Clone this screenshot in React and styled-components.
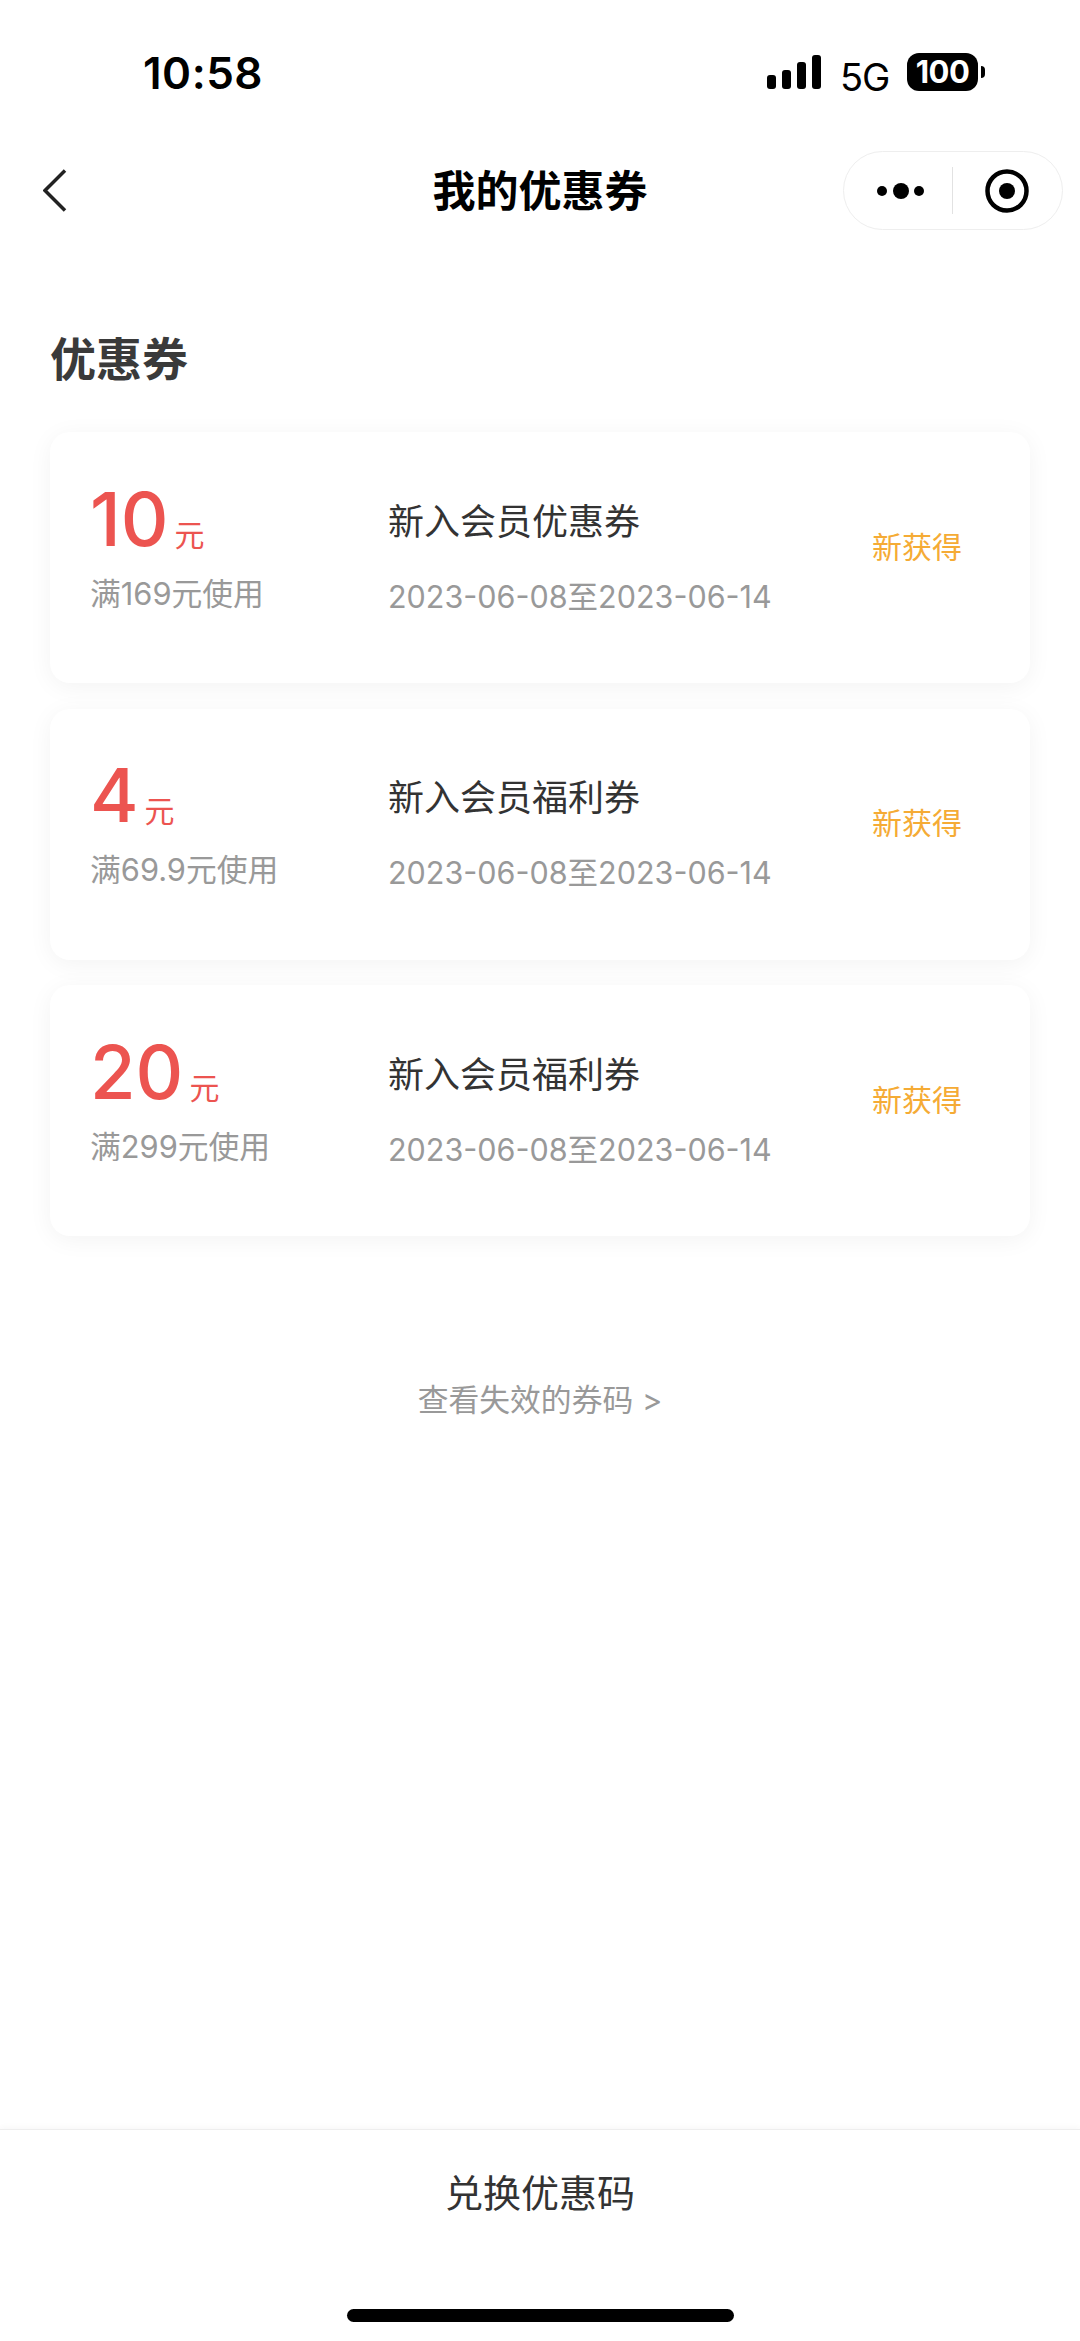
import styled, { createGlobalStyle } from "styled-components";

const GlobalStyle = createGlobalStyle`
  html, body {
    margin: 0;
    padding: 0;
    background: #fff;
  }
  * {
    box-sizing: border-box;
  }
`;

const Page = styled.div`
  width: 1080px;
  height: 2341px;
  display: flex;
  flex-direction: column;
  background: #fff;
  overflow: hidden;
  font-family: Inter, "Noto Sans CJK SC", sans-serif;
`;

const StatusBar = styled.div`
  height: 151px;
  padding: 53px 102px 0 143px;
  display: flex;
  justify-content: space-between;
  align-items: flex-start;
  color: #000;
`;
const Time = styled.div`
  font-size: 44px;
  line-height: 40px;
  font-weight: 600;
  letter-spacing: 0.5px;
`;
const StatusIcons = styled.div`
  display: flex;
  align-items: flex-start;
`;
const SignalIcon = styled.svg`
  width: 54px;
  height: 36px;
  margin-top: 2px;
`;
const Network = styled.div`
  margin-left: 19px;
  width: 48px;
  margin-top: 6px;
  font-size: 38px;
  line-height: 36px;
  letter-spacing: -1px;
`;
const Battery = styled.div`
  margin-left: 19px;
  width: 71px;
  height: 38px;
  border-radius: 12px;
  background: #000;
  color: #fff;
  font-size: 31px;
  font-weight: 700;
  line-height: 38px;
  text-align: center;
  letter-spacing: -0.5px;
  position: relative;
  &::after {
    content: "";
    position: absolute;
    left: 74px;
    top: 13px;
    width: 4px;
    height: 12px;
    border-radius: 0 6px 6px 0;
    background: #000;
  }
`;

const NavBar = styled.div`
  height: 79px;
  padding: 0 17px;
  display: grid;
  grid-template-columns: 1fr auto 1fr;
  align-items: center;
`;
const BackIcon = styled.svg`
  width: 24px;
  height: 44px;
  margin-left: 26px;
`;
const Title = styled.div`
  font-size: 43px;
  font-weight: 700;
  line-height: 60px;
  color: #000;
`;
const Capsule = styled.div`
  justify-self: end;
  width: 220px;
  height: 79px;
  border: 1px solid #eee;
  border-radius: 40px;
  display: flex;
  align-items: center;
`;
const Dots = styled.svg`
  width: 108px;
  height: 30px;
`;
const CapsuleDivider = styled.div`
  width: 1px;
  height: 47px;
  background: #e2e2e2;
`;
const TargetIcon = styled.svg`
  width: 50px;
  height: 50px;
  margin-left: 29px;
`;

const Content = styled.div`
  padding: 0 50px;
`;
const Heading = styled.h2`
  margin: 0;
  padding-top: 91px;
  font-size: 46px;
  line-height: 76px;
  font-weight: 600;
  color: #3a3a3a;
`;
const CouponList = styled.div`
  margin-top: 35px;
  display: flex;
  flex-direction: column;
  gap: 25.5px;
`;
const Card = styled.div`
  height: 251px;
  padding: 0 68px 20px 40px;
  border-radius: 20px;
  background: #fff;
  box-shadow: 0 4px 24px rgba(0, 0, 0, 0.05);
  display: grid;
  grid-template-columns: 298px 1fr auto;
  align-items: center;
`;
const Amount = styled.div`
  display: flex;
  align-items: baseline;
  color: #ec5450;
  height: 74px;
  line-height: 74px;
`;
const Value = styled.span`
  font-size: 74px;
  font-weight: 500;
`;
const Unit = styled.span`
  margin-left: 6px;
  font-size: 30px;
`;
const Condition = styled.div`
  margin-top: 18px;
  font-size: 30.8px;
  line-height: 40px;
  color: #999;
  white-space: nowrap;
`;
const Details = styled.div`
  padding-top: 19px;
`;
const CouponName = styled.div`
  font-size: 36px;
  line-height: 50px;
  color: #333;
`;
const Dates = styled.div`
  margin-top: 29px;
  font-size: 30.5px;
  line-height: 42px;
  color: #999;
  white-space: nowrap;
`;
const Status = styled.div`
  margin-bottom: 2px;
  font-size: 30px;
  line-height: 40px;
  color: #f5ab35;
`;
const ExpiredLink = styled.div`
  margin-top: 143px;
  text-align: center;
  font-size: 30.8px;
  line-height: 42px;
  color: #999;
`;

const Footer = styled.div`
  margin-top: auto;
  height: 212px;
  border-top: 1px solid #eee;
  box-shadow: 0 -2px 6px rgba(0, 0, 0, 0.03);
  display: flex;
  flex-direction: column;
  align-items: center;
`;
const RedeemButton = styled.div`
  margin-top: 36px;
  font-size: 38px;
  line-height: 54px;
  color: #333;
`;
const HomeIndicator = styled.div`
  margin-top: 89px;
  width: 387px;
  height: 13px;
  border-radius: 7px;
  background: #000;
`;

const coupons = [
  { value: "10", condition: "满169元使用", name: "新入会员优惠券" },
  { value: "4", condition: "满69.9元使用", name: "新入会员福利券" },
  { value: "20", condition: "满299元使用", name: "新入会员福利券" },
];

export default function App() {
  return (
    <Page>
      <GlobalStyle />
      <StatusBar>
        <Time>10:58</Time>
        <StatusIcons>
          <SignalIcon viewBox="0 0 54 36">
            <rect x="0" y="20" width="9" height="14" rx="3" />
            <rect x="15" y="15" width="9" height="19" rx="3" />
            <rect x="30" y="7" width="9" height="27" rx="3" />
            <rect x="45" y="0" width="9" height="34" rx="3" />
          </SignalIcon>
          <Network>5G</Network>
          <Battery>100</Battery>
        </StatusIcons>
      </StatusBar>
      <NavBar>
        <BackIcon viewBox="0 0 24 44">
          <path d="M22 1.5 L2 21.5 L22 41.5" fill="none" stroke="#222" strokeWidth="3.5" />
        </BackIcon>
        <Title>我的优惠券</Title>
        <Capsule>
          <Dots viewBox="0 0 108 30">
            <circle cx="38" cy="15" r="5" />
            <circle cx="57" cy="15" r="8" />
            <circle cx="75" cy="15" r="5" />
          </Dots>
          <CapsuleDivider />
          <TargetIcon viewBox="0 0 50 50">
            <circle cx="25" cy="25" r="19.5" fill="none" stroke="#000" strokeWidth="4.5" />
            <circle cx="25" cy="25" r="8" />
          </TargetIcon>
        </Capsule>
      </NavBar>
      <Content>
        <Heading>优惠券</Heading>
        <CouponList>
          {coupons.map((coupon) => (
            <Card key={coupon.value}>
              <div>
                <Amount>
                  <Value>{coupon.value}</Value>
                  <Unit>元</Unit>
                </Amount>
                <Condition>{coupon.condition}</Condition>
              </div>
              <Details>
                <CouponName>{coupon.name}</CouponName>
                <Dates>2023-06-08至2023-06-14</Dates>
              </Details>
              <Status>新获得</Status>
            </Card>
          ))}
        </CouponList>
        <ExpiredLink>查看失效的券码 &gt;</ExpiredLink>
      </Content>
      <Footer>
        <RedeemButton>兑换优惠码</RedeemButton>
        <HomeIndicator />
      </Footer>
    </Page>
  );
}
